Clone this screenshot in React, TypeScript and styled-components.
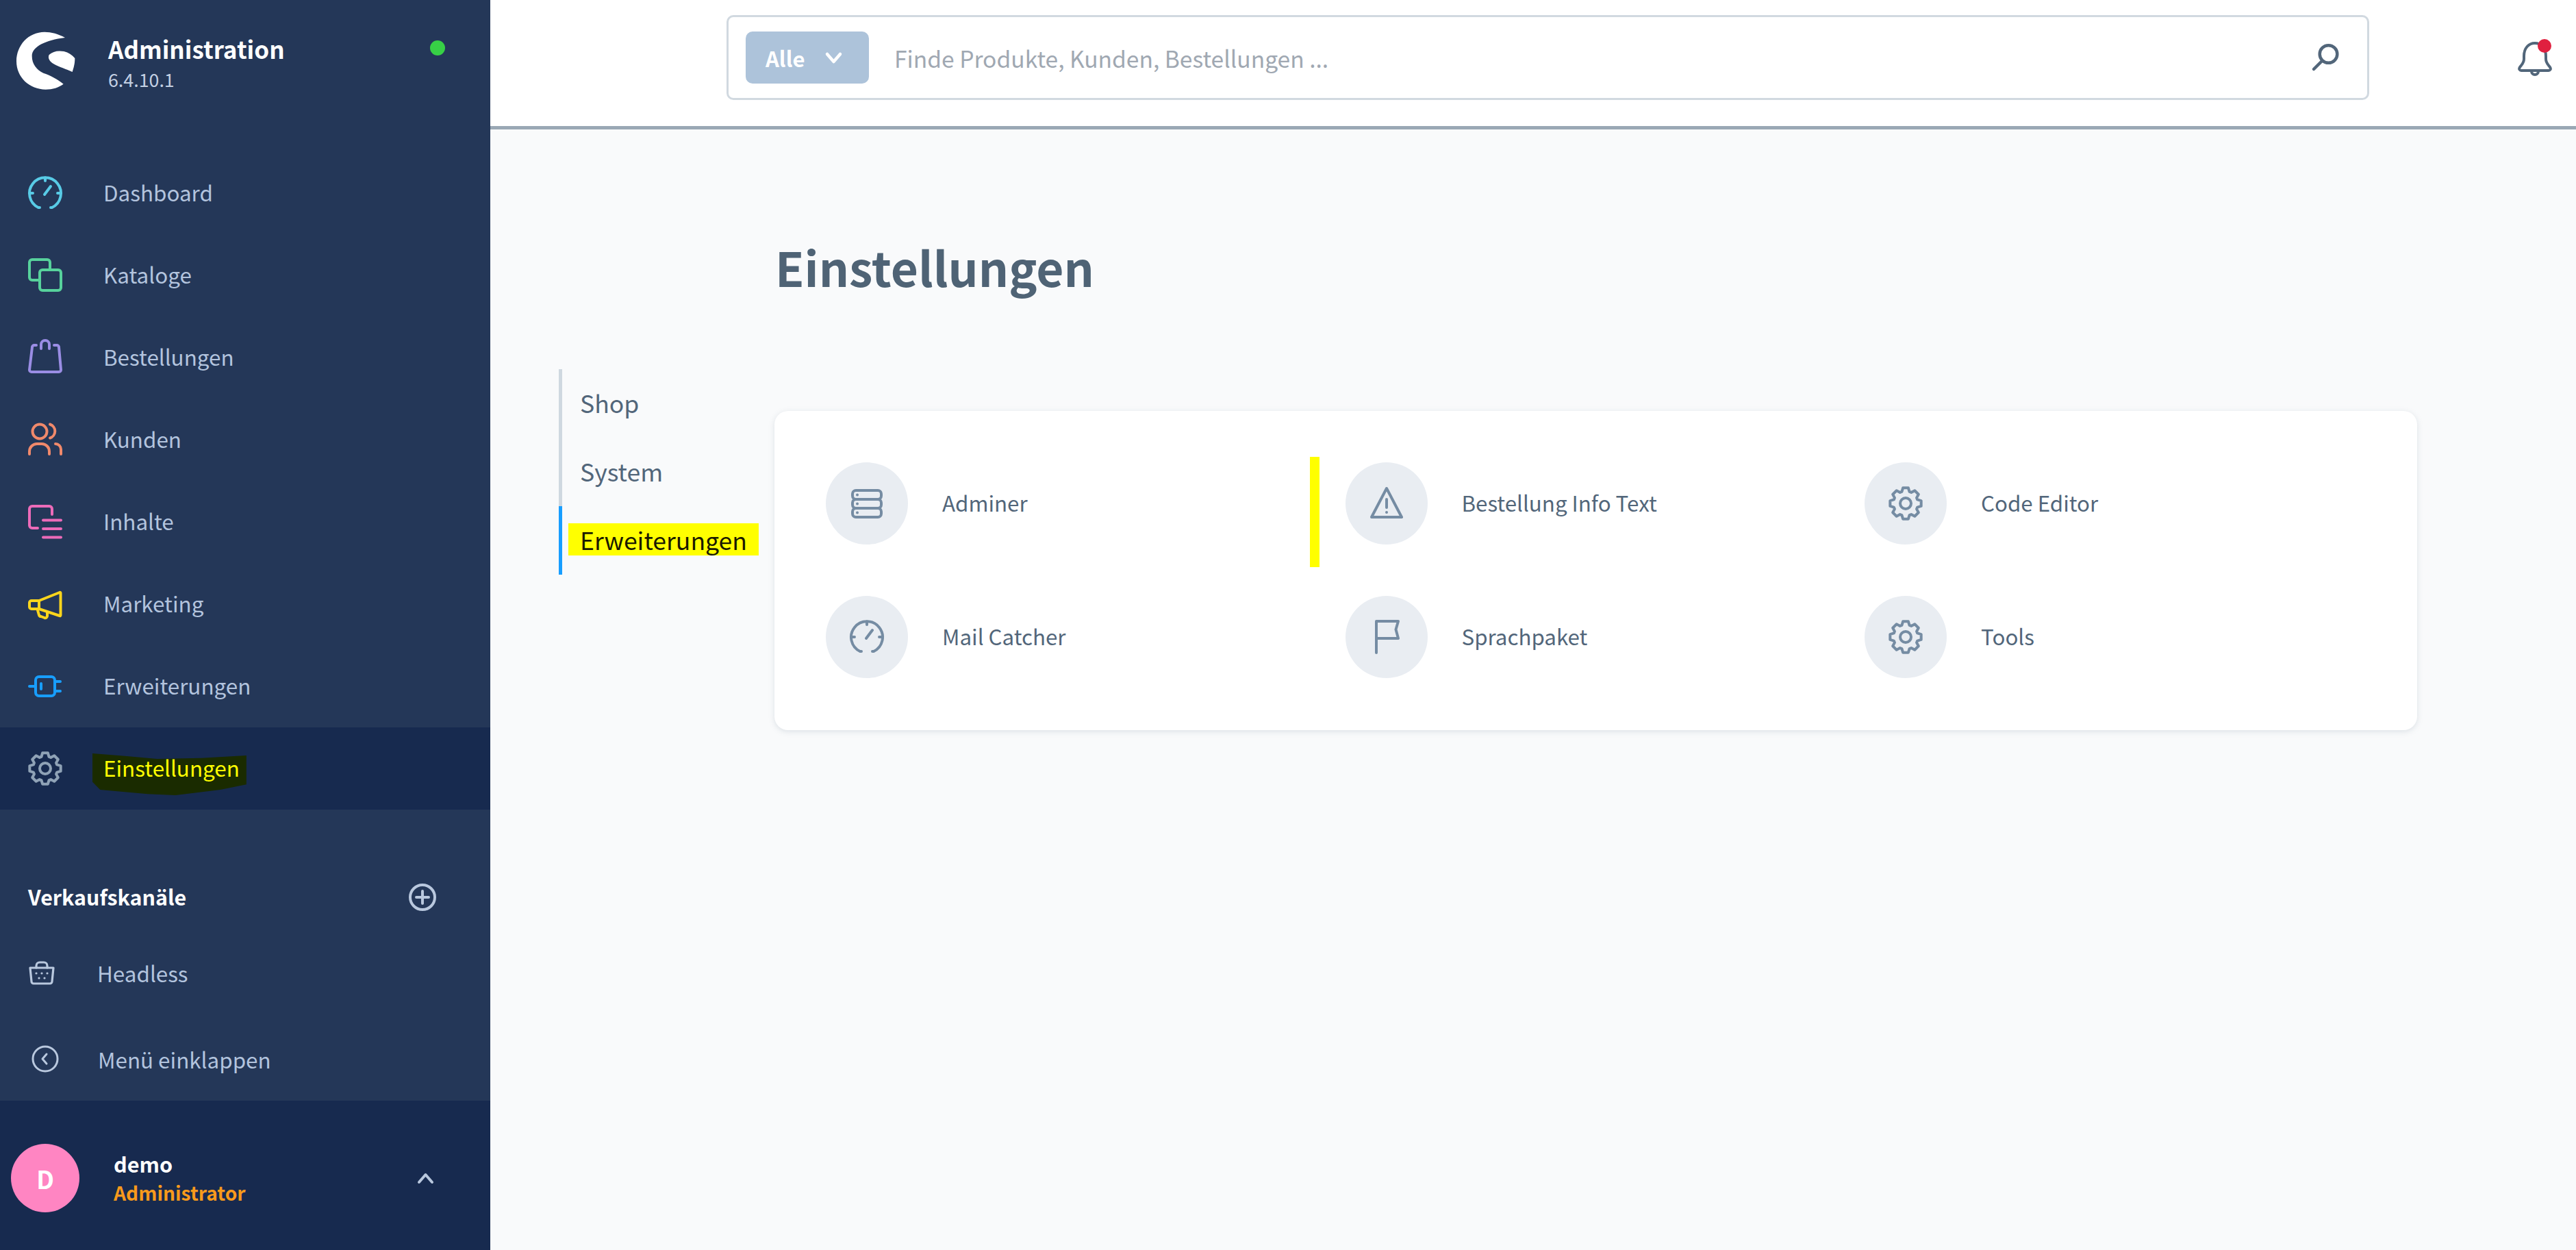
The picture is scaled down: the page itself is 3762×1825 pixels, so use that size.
import React from "react";
import styled, { createGlobalStyle } from "styled-components";

const FONT = `"Noto Sans CJK SC", "Source Sans Pro", "Noto Sans", sans-serif`;

const Global = createGlobalStyle`
  html, body { margin: 0; padding: 0; height: 100%; overflow: hidden; background: #f9fafb; }
  * { box-sizing: border-box; }
  body { font-family: ${FONT}; }
`;

const Page = styled.div`
  display: flex;
  width: 3762px;
  height: 1825px;
  overflow: hidden;
`;

const Sidebar = styled.aside`
  width: 716px;
  flex: none;
  display: flex;
  flex-direction: column;
  background: #243758;
`;

const Brand = styled.div`
  height: 222px;
  flex: none;
  display: flex;
  align-items: flex-start;
  padding: 30px 66px 0 10px;
`;

const Logo = styled.svg`
  width: 120px;
  height: 120px;
  flex: none;
  margin-right: 28px;
  fill: #fff;
`;

const BrandText = styled.div`
  display: flex;
  flex-direction: column;
  padding-top: 19px;
`;

const BrandTitle = styled.div`
  font-size: 35px;
  line-height: 44px;
  font-weight: 600;
  color: #fff;
`;

const BrandVersion = styled.div`
  font-size: 26.8px;
  line-height: 40px;
  margin-top: 3px;
  color: #c3d0e3;
`;

const StatusDot = styled.span`
  width: 22px;
  height: 22px;
  margin: 29px 0 0 auto;
  border-radius: 50%;
  background: #37d046;
`;

const Icon = styled.svg<{ $size?: number; $color?: string; $w?: number }>`
  flex: none;
  width: ${(p) => p.$size ?? 50}px;
  height: ${(p) => p.$size ?? 50}px;
  overflow: visible;
  color: ${(p) => p.$color ?? "currentColor"};
  fill: none;
  stroke: currentColor;
  stroke-width: ${(p) => p.$w ?? 4};
  stroke-linecap: round;
  stroke-linejoin: round;
`;

const NavRow = styled.div<{ $active?: boolean }>`
  height: 120px;
  flex: none;
  display: flex;
  align-items: center;
  gap: 60px;
  padding-left: 41px;
  background: ${(p) => (p.$active ? "#172a4f" : "transparent")};
`;

const NavLabel = styled.span`
  font-size: 31.4px;
  line-height: 44px;
  margin-top: -2px;
  color: #b3c4de;
`;

const MarkedLabel = styled(NavLabel)`
  position: relative;
  z-index: 0;
  color: #ffff00;
  &::before {
    content: "";
    position: absolute;
    z-index: -1;
    left: -16px;
    right: -10px;
    top: 1px;
    bottom: -18px;
    background: #1a2b00;
    clip-path: polygon(0 0, 21% 6%, 42% 13%, 71% 11%, 100% 5%, 100% 74%, 83% 87%, 54% 100%, 36% 97%, 5% 87%, 0 68%);
  }
`;

const SectionHead = styled.div`
  margin-top: 98px;
  height: 60px;
  flex: none;
  display: flex;
  align-items: center;
  justify-content: space-between;
  padding: 0 79px 0 41px;
`;

const SectionTitle = styled.span`
  font-size: 30.4px;
  line-height: 44px;
  margin-top: -2px;
  font-weight: 600;
  color: #fff;
`;

const ChannelRow = styled.div<{ $top: number; $left: number; $gap: number }>`
  height: 100px;
  flex: none;
  margin-top: ${(p) => p.$top}px;
  display: flex;
  align-items: center;
  gap: ${(p) => p.$gap}px;
  padding-left: ${(p) => p.$left}px;
`;

const ChannelLabel = styled.span`
  font-size: 31.4px;
  line-height: 44px;
  margin-top: 2px;
  color: #b3c4de;
`;

const UserBar = styled.div`
  margin-top: auto;
  height: 218px;
  flex: none;
  display: flex;
  align-items: center;
  padding: 8px 82px 0 16px;
  background: #172a4f;
`;

const Avatar = styled.div`
  width: 100px;
  height: 100px;
  flex: none;
  margin-right: 50px;
  border-radius: 50%;
  background: #ff85c2;
  color: #fff;
  display: flex;
  align-items: center;
  justify-content: center;
  font-size: 36px;
  font-weight: 600;
`;

const UserText = styled.div`
  display: flex;
  flex-direction: column;
  margin-right: auto;
`;

const UserName = styled.div`
  font-size: 30.6px;
  line-height: 42px;
  font-weight: 600;
  color: #fff;
`;

const UserRole = styled.div`
  font-size: 28.2px;
  line-height: 42px;
  font-weight: 600;
  color: #f79a1c;
`;

const Main = styled.main`
  flex: 1;
  min-width: 0;
  display: flex;
  flex-direction: column;
  background: #f9fafb;
`;

const TopBar = styled.header`
  height: 189px;
  flex: none;
  display: flex;
  align-items: flex-start;
  padding: 22px 0 0 345px;
  background: #fff;
  border-bottom: 5px solid #9aa8b5;
`;

const SearchBox = styled.div`
  width: 2399px;
  height: 124px;
  flex: none;
  display: flex;
  align-items: center;
  padding: 0 41px 0 25px;
  background: #fff;
  border: 3px solid #d1d9e0;
  border-radius: 10px;
`;

const ScopeButton = styled.div`
  width: 180px;
  height: 76px;
  flex: none;
  display: flex;
  align-items: center;
  gap: 30px;
  padding-left: 29px;
  border-radius: 10px;
  background: #adc3da;
  color: #fff;
  font-size: 31px;
  font-weight: 600;
`;

const Placeholder = styled.span`
  margin-left: 37px;
  margin-right: auto;
  font-size: 33.6px;
  color: #a0a8b2;
`;

const Bell = styled.div`
  position: relative;
  width: 50px;
  height: 50px;
  flex: none;
  margin: 38px 0 0 217px;
  color: #52667a;
`;

const BellBadge = styled.span`
  position: absolute;
  top: -3px;
  right: 1px;
  width: 20px;
  height: 20px;
  border-radius: 50%;
  background: #e0203f;
`;

const PageTitle = styled.h1`
  margin: 160px 0 0 416px;
  font-size: 69.3px;
  line-height: 80px;
  font-weight: 600;
  color: #4f6375;
`;

const Content = styled.div`
  display: flex;
  align-items: flex-start;
  padding: 110px 0 0 100px;
`;

const SubNav = styled.nav`
  width: 315px;
  flex: none;
  display: flex;
  flex-direction: column;
`;

const SubNavItem = styled.div<{ $active?: boolean }>`
  height: 100px;
  display: flex;
  align-items: center;
  padding-left: 26px;
  border-left: 5px solid ${(p) => (p.$active ? "#189eff" : "#cfd8e0")};
  font-size: 35.6px;
  color: #52667a;
`;

const SubNavText = styled.span`
  margin-top: -3px;
`;

const Highlight = styled.span`
  margin-left: -17px;
  padding: 0 17px;
  height: 47px;
  line-height: 47px;
  margin-top: -3px;
  background: #ffff00;
  color: #1a1a00;
`;

const Card = styled.section`
  width: 2399px;
  height: 466px;
  flex: none;
  margin-top: 61px;
  padding: 75px 0 0 75px;
  display: grid;
  grid-template-columns: repeat(3, 758.5px);
  grid-auto-rows: 120px;
  row-gap: 75px;
  background: #fff;
  border-radius: 20px;
  box-shadow: 0 2px 8px rgba(120, 138, 155, 0.22);
`;

const CardItem = styled.div`
  position: relative;
  display: flex;
  align-items: center;
  gap: 50px;
`;

const Marker = styled.span`
  position: absolute;
  left: -51.5px;
  top: -8px;
  width: 14px;
  height: 161px;
  background: #ffff00;
`;

const IconCircle = styled.div`
  width: 120px;
  height: 120px;
  flex: none;
  display: flex;
  align-items: center;
  justify-content: center;
  border-radius: 50%;
  background: #e9edf2;
`;

const CardLabel = styled.span`
  font-size: 31.3px;
  margin-top: -3px;
  color: #52667a;
`;

/* ---------- drawings ---------- */

const gearPath = (() => {
  const teeth = 8;
  const pts: string[] = [];
  const R = 23;
  const r = 18;
  for (let i = 0; i < teeth; i++) {
    const a = (i * 2 * Math.PI) / teeth - Math.PI / 2;
    const step = (2 * Math.PI) / teeth;
    const offs: [number, number][] = [
      [-0.5, r],
      [-0.27, R],
      [0.27, R],
      [0.5, r],
    ];
    offs.forEach(([o, rad]) => {
      const t = a + o * step * 0.8;
      pts.push(`${(25 + rad * Math.cos(t)).toFixed(2)} ${(25 + rad * Math.sin(t)).toFixed(2)}`);
    });
  }
  return `M${pts.join(" L")} Z`;
})();

const Gauge = () => (
  <>
    <path d="M17 46 H15 A23 23 0 1 1 35 46 H33" />
    <path d="M25 2.5 V7 M2.5 25 H7 M43 25 H47.5 M24 27 L33 15" />
  </>
);

const Gear = () => (
  <>
    <path d={gearPath} />
    <circle cx="25" cy="25" r="8" />
  </>
);

const drawings: Record<string, React.ReactNode> = {
  gauge: <Gauge />,
  gear: <Gear />,
  catalog: (
    <>
      <path d="M32 15 V6 a4 4 0 0 0-4-4 H6 a4 4 0 0 0-4 4 V28 a4 4 0 0 0 4 4 H15" />
      <rect x="17" y="17" width="31" height="30" rx="4" />
    </>
  ),
  bag: (
    <>
      <path d="M12 7 H9 a3 3 0 0 0-3 3 L2 43 a3 3 0 0 0 3 3 H45 a3 3 0 0 0 3-3 L45 10 a3 3 0 0 0-3-3 H38" />
      <path d="M19 12 V6 a6 6 0 0 1 12 0 V12" />
    </>
  ),
  users: (
    <>
      <circle cx="17" cy="13" r="10.5" />
      <path d="M32 2.5 a10.5 10.5 0 0 1 0 20" />
      <path d="M2 46 V42 a11 11 0 0 1 11-11 H20 a11 11 0 0 1 11 11 V46" />
      <path d="M40 31 a8 8 0 0 1 8 8 V46" />
    </>
  ),
  content: (
    <>
      <path d="M35 14 V6 a4 4 0 0 0-4-4 H6 a4 4 0 0 0-4 4 V30 a4 4 0 0 0 4 4 H14" />
      <path d="M22 22.5 H48 M22 35 H48 M22 47.5 H48" />
    </>
  ),
  megaphone: (
    <>
      <path d="M16 20 L46 8 a1 1 0 0 1 1.5 1 V41 a1 1 0 0 1-1.5 1 L16 32 Z" />
      <path d="M16 20 H5 a3 3 0 0 0-3 3 V29 a3 3 0 0 0 3 3 H16" />
      <path d="M14 34 L16 41 a3 3 0 0 0 3 2 L24 45 a3 3 0 0 0 4-3 V37" />
    </>
  ),
  plug: (
    <>
      <rect x="11" y="11" width="28" height="28" rx="5" />
      <path d="M2 25 H11 M39 18 H47 M39 32 H47 M19 21 V29" />
    </>
  ),
  database: (
    <>
      <rect x="4" y="6" width="42" height="13" rx="5" />
      <rect x="4" y="19" width="42" height="13" rx="5" />
      <rect x="4" y="32" width="42" height="13" rx="5" />
      <path d="M11 12.5 h.01 M11 25.5 h.01 M11 38.5 h.01" />
    </>
  ),
  warning: (
    <>
      <path d="M25 3 L47 45 H3 Z" />
      <path d="M25 19 V31 M25 38 h.01" />
    </>
  ),
  flag: <path d="M10 48 V2 H42 L38.5 14 L42 27 H10" />,
  search: (
    <>
      <circle cx="24.5" cy="15" r="12.8" />
      <path d="M15 25 L3 37" />
    </>
  ),
  bell: (
    <>
      <path d="M9 22 C9 10 16 3 25 3 C34 3 41 10 41 22 V26 C41 32 44 34 47 38 C49 41 47 43 45 43 H5 C3 43 1 41 3 38 C6 34 9 32 9 26 Z" />
      <path d="M20 44 a5 5 0 0 0 10 0" />
    </>
  ),
  basket: (
    <>
      <path d="M3 13 H37 L35 33 a3 3 0 0 1-3 3 H8 a3 3 0 0 1-3-3 Z" />
      <path d="M12 13 V10 a5 5 0 0 1 5-5 H23 a5 5 0 0 1 5 5 V13" />
      <path d="M12 21 h.01 M20 21 h.01 M28 21 h.01 M16 28 h.01 M24 28 h.01" />
    </>
  ),
  plusCircle: (
    <>
      <circle cx="20" cy="20" r="18" />
      <path d="M20 11 V29 M11 20 H29" />
    </>
  ),
  backCircle: (
    <>
      <circle cx="20" cy="20" r="18" />
      <path d="M22 13 L16 20 L22 27" />
    </>
  ),
  chevronDown: <path d="M3 3 L12.5 14 L22 3" />,
  chevronUp: <path d="M3 14 L12.5 3 L22 14" />,
};

const navItems = [
  { key: "gauge", color: "#58cbe6", label: "Dashboard" },
  { key: "catalog", color: "#57d29c", label: "Kataloge" },
  { key: "bag", color: "#9a8de4", label: "Bestellungen" },
  { key: "users", color: "#f0896b", label: "Kunden" },
  { key: "content", color: "#ec6bb9", label: "Inhalte" },
  { key: "megaphone", color: "#fbd51c", label: "Marketing" },
  { key: "plug", color: "#189eff", label: "Erweiterungen" },
];

const cardItems = [
  { key: "database", label: "Adminer" },
  { key: "warning", label: "Bestellung Info Text", marked: true },
  { key: "gear", label: "Code Editor" },
  { key: "gauge", label: "Mail Catcher" },
  { key: "flag", label: "Sprachpaket" },
  { key: "gear", label: "Tools" },
];

export default function App() {
  return (
    <Page>
      <Global />
      <Sidebar>
        <Brand>
          <Logo viewBox="0 0 360 360">
            <path d="M255 75 C225 58 195 50 165 50 C95 50 42 108 42 178 C42 250 100 302 170 302 C200 302 228 293 248 278 C220 255 190 240 160 230 C130 215 110 190 110 155 C110 115 170 85 255 75 Z" />
            <path d="M185 150 C200 135 225 130 250 135 C270 140 285 150 298 165 C298 190 293 205 287 225 C260 212 230 205 205 190 C188 180 178 165 185 150 Z" />
          </Logo>
          <BrandText>
            <BrandTitle>Administration</BrandTitle>
            <BrandVersion>6.4.10.1</BrandVersion>
          </BrandText>
          <StatusDot />
        </Brand>

        {navItems.map((item) => (
          <NavRow key={item.label}>
            <Icon viewBox="0 0 50 50" $color={item.color}>
              {drawings[item.key]}
            </Icon>
            <NavLabel>{item.label}</NavLabel>
          </NavRow>
        ))}
        <NavRow $active>
          <Icon viewBox="0 0 50 50" $color="#8fa2b6">
            {drawings.gear}
          </Icon>
          <MarkedLabel>Einstellungen</MarkedLabel>
        </NavRow>

        <SectionHead>
          <SectionTitle>Verkaufskanäle</SectionTitle>
          <Icon viewBox="0 0 40 40" $size={40} $color="#b9c8de">
            {drawings.plusCircle}
          </Icon>
        </SectionHead>
        <ChannelRow $top={30} $left={41} $gap={61}>
          <Icon viewBox="0 0 40 40" $size={40} $w={3.2} $color="#b9c8de">
            {drawings.basket}
          </Icon>
          <ChannelLabel>Headless</ChannelLabel>
        </ChannelRow>
        <ChannelRow $top={26} $left={46} $gap={57}>
          <Icon viewBox="0 0 40 40" $size={40} $w={3} $color="#b9c8de">
            {drawings.backCircle}
          </Icon>
          <ChannelLabel>Menü einklappen</ChannelLabel>
        </ChannelRow>

        <UserBar>
          <Avatar>D</Avatar>
          <UserText>
            <UserName>demo</UserName>
            <UserRole>Administrator</UserRole>
          </UserText>
          <Icon viewBox="0 0 25 17" $size={25} $w={4} $color="#b9c8de">
            {drawings.chevronUp}
          </Icon>
        </UserBar>
      </Sidebar>

      <Main>
        <TopBar>
          <SearchBox>
            <ScopeButton>
              Alle
              <Icon viewBox="0 0 25 17" $size={25} $w={4.5} $color="#fff">
                {drawings.chevronDown}
              </Icon>
            </ScopeButton>
            <Placeholder>Finde Produkte, Kunden, Bestellungen ...</Placeholder>
            <Icon viewBox="0 0 40 40" $size={40} $w={4.5} $color="#52667a">
              {drawings.search}
            </Icon>
          </SearchBox>
          <Bell>
            <Icon viewBox="0 0 50 50" $w={4}>
              {drawings.bell}
            </Icon>
            <BellBadge />
          </Bell>
        </TopBar>

        <PageTitle>Einstellungen</PageTitle>

        <Content>
          <SubNav>
            <SubNavItem>
              <SubNavText>Shop</SubNavText>
            </SubNavItem>
            <SubNavItem>
              <SubNavText>System</SubNavText>
            </SubNavItem>
            <SubNavItem $active>
              <Highlight>Erweiterungen</Highlight>
            </SubNavItem>
          </SubNav>
          <Card>
            {cardItems.map((item) => (
              <CardItem key={item.label}>
                {item.marked && <Marker />}
                <IconCircle>
                  <Icon viewBox="0 0 50 50" $color="#758ca3">
                    {drawings[item.key]}
                  </Icon>
                </IconCircle>
                <CardLabel>{item.label}</CardLabel>
              </CardItem>
            ))}
          </Card>
        </Content>
      </Main>
    </Page>
  );
}
